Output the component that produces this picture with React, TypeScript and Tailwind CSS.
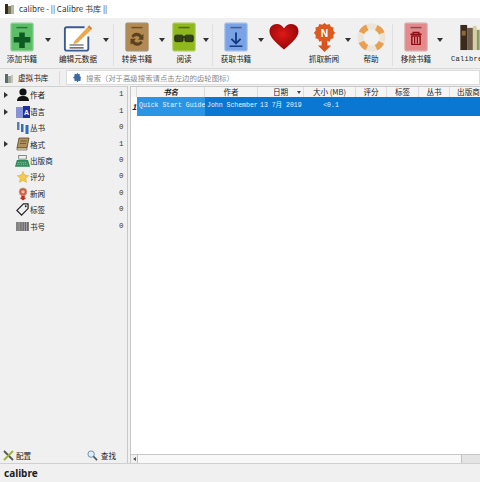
import React from 'react';

const cjk = { fontFamily: '"Noto Sans CJK SC", sans-serif' };

const Arrow = () => (
  <div className="w-0 h-0 border-l-[3.5px] border-r-[3.5px] border-t-[4px] border-l-transparent border-r-transparent border-t-[#333]" />
);

const BookShape = ({ fill, edge, children }: { fill: string; edge: string; children?: React.ReactNode }) => (
  <svg width="24" height="30" viewBox="0 0 26 32">
    <rect x="1" y="1" width="24" height="30" rx="1.5" fill={fill} stroke={edge} strokeWidth="1.2" />
    <rect x="7" y="5" width="12" height="1.6" fill="#222" opacity=".55" />
    {children}
  </svg>
);

const AddIcon = () => (
  <BookShape fill="#5cbf68" edge="#8ccf90">
    <path d="M10 11h6v5h6v6h-6v6h-6v-6H4v-6h6z" fill="#0d5a22" />
  </BookShape>
);

const EditIcon = () => (
  <svg width="30" height="29" viewBox="0 0 32 30">
    <path d="M23 4H4a2 2 0 0 0-2 2v21a2 2 0 0 0 2 2h21a2 2 0 0 0 2-2V14" fill="#fff" stroke="#3c5a92" strokeWidth="2" />
    <path d="M12 19 26 4l4 3-15 14-4 1z" fill="#eda94f" />
    <path d="M26 4l2-2 3 3-1 2z" fill="#d0863a" />
    <path d="M7 23h15M7 26h15" stroke="#444" strokeWidth="1.2" />
  </svg>
);

const ConvertIcon = () => (
  <BookShape fill="#b48a52" edge="#a08c6c">
    <path d="M7 15a6.5 6.5 0 0 1 11-1l2-1v6h-6l2-2a4 4 0 0 0-7 0z" fill="#5a4320" />
    <path d="M19 22a6.5 6.5 0 0 1-11 1l-2 1v-6h6l-2 2a4 4 0 0 0 7 0z" fill="#5a4320" />
  </BookShape>
);

const ReadIcon = () => (
  <BookShape fill="#8eb81c" edge="#a5c84a">
    <rect x="3" y="14" width="9" height="7" rx="1.5" fill="#33401a" stroke="#1f2a10" />
    <rect x="14" y="14" width="9" height="7" rx="1.5" fill="#33401a" stroke="#1f2a10" />
    <path d="M12 16h2" stroke="#1f2a10" strokeWidth="1.4" />
  </BookShape>
);

const GetIcon = () => (
  <BookShape fill="#7aa3e6" edge="#9dbbe8">
    <path d="M13 11v11M8 18l5 5 5-5" fill="none" stroke="#153a80" strokeWidth="2" />
    <path d="M6 26h14" stroke="#153a80" strokeWidth="1.6" />
  </BookShape>
);

const HeartIcon = () => (
  <svg width="30" height="28" viewBox="0 0 31 28">
    <defs>
      <radialGradient id="heart" cx="45%" cy="40%" r="65%">
        <stop offset="0%" stopColor="#e01818" />
        <stop offset="100%" stopColor="#8c0404" />
      </radialGradient>
    </defs>
    <path d="M15.5 27C9 21 .5 15 .5 8 .5 3.500 4 .5 8 .5c3.500 0 6 2 7.500 4.500C17 2.500 19.500 .5 23 .5c4 0 7.500 3 7.500 7.500 0 7-8.500 13-15 19z" fill="url(#heart)" />
  </svg>
);

const NewsIcon = () => (
  <svg width="21" height="29" viewBox="0 0 22 31">
    <path d="M8 19h6v5h4l-7 7-7-7h4z" fill="#d9531e" />
    <path d="M11 0l2.500 2 3-1 1.200 3 3 .8-.4 3.200 2 2.500-2 2.500.4 3.200-3 .8-1.200 3-3-1-2.500 2-2.500-2-3 1-1.200-3-3-.8.400-3.200-2-2.500 2-2.500-.4-3.200 3-.8 1.200-3 3 1z" fill="#dc5a20" />
    <text x="11" y="15" textAnchor="middle" fontSize="11" fontWeight="700" fill="#fff" fontFamily="Liberation Sans, sans-serif">N</text>
  </svg>
);

const HelpIcon = () => (
  <svg width="29" height="29" viewBox="0 0 29 29">
    <circle cx="14.5" cy="14.5" r="11" fill="none" stroke="#ece4d6" strokeWidth="6" />
    <circle cx="14.500" cy="14.500" r="11" fill="none" stroke="#e8a050" strokeWidth="6" strokeDasharray="8 9.28" strokeDashoffset="4" transform="rotate(45 14.5 14.5)" />
  </svg>
);

const RemoveIcon = () => (
  <BookShape fill="#e58a8c" edge="#d8a8a8">
    <path d="M7 13h12M10 13v-2h6v2M8.500 15h9v9h-9z" fill="none" stroke="#8e0f14" strokeWidth="1.600" />
    <path d="M11.500 16v7M14.500 16v7" stroke="#8e0f14" strokeWidth="1.300" />
  </BookShape>
);

const ShelfIcon = () => (
  <svg width="20" height="27" viewBox="0 0 20 28">
    <rect x="0" y="1" width="7" height="26" fill="#3b2a1c" />
    <rect x="7" y="4" width="6" height="23" fill="#6d5f48" />
    <rect x="13" y="2" width="4" height="25" fill="#d8cfa8" />
    <rect x="17" y="6" width="3" height="21" fill="#8a9a60" />
    <rect x="1.500" y="7" width="4" height="5" fill="#8a6a38" />
  </svg>
);

type Tool = {
  label: string;
  box: string;
  icon: React.ReactNode;
  arrow?: string;
  sep?: string;
  mono?: boolean;
};

// box = left margin + width so each icon and label land on the reference's centre line
const tools: Tool[] = [
  { label: '添加书籍', box: 'w-[44px]', icon: <AddIcon />, arrow: 'left-[44.5px]' },
  { label: '编辑元数据', box: 'ml-[12px] w-[44px]', icon: <EditIcon />, arrow: 'left-[46.5px]', sep: 'left-[57px]' },
  { label: '转换书籍', box: 'ml-[15px] w-[44px]', icon: <ConvertIcon />, arrow: 'left-[43.5px]' },
  { label: '阅读', box: 'ml-[3px] w-[44px]', icon: <ReadIcon />, arrow: 'left-[40.5px]', sep: 'left-[50px]' },
  { label: '获取书籍', box: 'ml-[8px] w-[44px]', icon: <GetIcon />, arrow: 'left-[43.5px]' },
  { label: '', box: 'ml-[11px] w-[30px]', icon: <HeartIcon /> },
  { label: '抓取新闻', box: 'ml-[3px] w-[44px]', icon: <NewsIcon />, arrow: 'left-[42.5px]' },
  { label: '帮助', box: 'ml-[3px] w-[44px]', icon: <HelpIcon />, sep: 'left-[43px]' },
  { label: '移除书籍', box: 'ml-[1px] w-[44px]', icon: <RemoveIcon />, arrow: 'left-[42.5px]' },
  { label: 'Calibre 书库', box: 'ml-[13px] w-[60px]', icon: <ShelfIcon />, mono: true },
];

const ToolButton = ({ tool }: { tool: Tool }) => (
  <div className={`relative shrink-0 flex flex-col ${tool.mono ? 'items-start' : 'items-center'} ${tool.box}`}>
    <div className={`flex h-[30px] items-center justify-center ${tool.mono ? 'ml-[9px]' : ''}`}>{tool.icon}</div>
    <div
      className={`mt-[1px] whitespace-nowrap leading-[12px] text-[#222] ${tool.mono ? 'text-[7px] tracking-[0.3px]' : 'text-[7.6px]'}`}
      style={tool.mono ? { fontFamily: '"Liberation Mono", monospace' } : cjk}
    >
      {tool.label}
    </div>
    {tool.arrow && (
      <div className={`absolute top-[16px] ${tool.arrow}`}>
        <Arrow />
      </div>
    )}
    {tool.sep && <div className={`absolute top-[2px] h-[42px] w-px bg-[#e0e0e0] ${tool.sep}`} />}
  </div>
);

const PersonIcon = () => (
  <svg width="14" height="14" viewBox="0 0 14 14">
    <circle cx="7" cy="4" r="3.600" fill="#111" />
    <path d="M1 13c0-4 3-5 6-5s6 1 6 5z" fill="#111" />
  </svg>
);
const LangIcon = () => (
  <svg width="14" height="14" viewBox="0 0 14 14">
    <rect x="0" y="2" width="7" height="11" fill="#8892d8" />
    <rect x="7" y="1" width="7" height="12" fill="#20309a" />
    <text x="10.500" y="10" textAnchor="middle" fontSize="7" fontWeight="700" fill="#fff" fontFamily="Liberation Sans, sans-serif">A</text>
  </svg>
);
const SeriesIcon = () => (
  <svg width="14" height="14" viewBox="0 0 14 14">
    <rect x="1" y="1" width="2.500" height="8" fill="#5a7fa8" />
    <rect x="5" y="3" width="2.500" height="8" fill="#3a6ea8" />
    <rect x="9.500" y="4" width="3" height="9" fill="#2a70c0" />
  </svg>
);
const FormatIcon = () => (
  <svg width="14" height="14" viewBox="0 0 14 14">
    <path d="M3 1h10l-2 10H1z" fill="#b0905c" stroke="#5a4628" strokeWidth=".8" />
    <path d="M1 11h10v2H1z" fill="#e8dcc0" stroke="#5a4628" strokeWidth=".6" />
    <path d="M4.500 4h6M4 6.500h6" stroke="#5a4628" strokeWidth=".7" />
  </svg>
);
const PublisherIcon = () => (
  <svg width="16" height="14" viewBox="0 0 16 14">
    <rect x="4" y="1" width="8" height="4" fill="#eee" stroke="#555" strokeWidth=".7" />
    <path d="M2 6h12l2 7H0z" fill="#2f8a5a" />
    <path d="M3 8.500h10M2.500 10.500h11" stroke="#bfe8d0" strokeWidth=".8" strokeDasharray="1 1" />
  </svg>
);
const StarIcon = () => (
  <svg width="12" height="12" viewBox="0 0 14 14">
    <path d="M7 .5l2 4.300 4.700.6-3.500 3.200.9 4.700L7 11l-4.100 2.300.9-4.700L.3 5.400 5 4.800z" fill="#f2c94c" stroke="#e0a830" strokeWidth=".6" />
  </svg>
);
const NewsSmallIcon = () => (
  <svg width="12" height="14" viewBox="0 0 14 15">
    <path d="M5 9h4v3h2l-4 3-4-3h2z" fill="#b83020" />
    <circle cx="7" cy="5" r="4.500" fill="#d85a40" stroke="#b0a080" strokeWidth=".8" />
    <circle cx="7" cy="5" r="2" fill="#f2c0a8" />
  </svg>
);
const TagIcon = () => (
  <svg width="13" height="13" viewBox="0 0 14 14">
    <path d="M1 8l7-7h5v5l-7 7z" fill="#eee" stroke="#222" strokeWidth="1.300" />
    <circle cx="10.500" cy="3.500" r="1" fill="#222" />
  </svg>
);
const BarcodeIcon = () => (
  <svg width="13" height="9" viewBox="0 0 14 10">
    <rect width="14" height="10" fill="#666" />
    <path d="M2 0v10M4 0v10M6.500 0v10M9 0v10M11.500 0v10" stroke="#ccc" strokeWidth=".7" />
  </svg>
);

const categories: { icon: React.ReactNode; label: string; count: number; expand?: boolean }[] = [
  { icon: <PersonIcon />, label: '作者', count: 1, expand: true },
  { icon: <LangIcon />, label: '语言', count: 1, expand: true },
  { icon: <SeriesIcon />, label: '丛书', count: 0 },
  { icon: <FormatIcon />, label: '格式', count: 1, expand: true },
  { icon: <PublisherIcon />, label: '出版商', count: 0 },
  { icon: <StarIcon />, label: '评分', count: 0 },
  { icon: <NewsSmallIcon />, label: '新闻', count: 0 },
  { icon: <TagIcon />, label: '标签', count: 0 },
  { icon: <BarcodeIcon />, label: '书号', count: 0 },
];

const columns: { label: string; width: string; bold?: boolean; sort?: boolean }[] = [
  { label: '书名', width: 'w-[68px]', bold: true },
  { label: '作者', width: 'w-[53px]' },
  { label: '日期', width: 'w-[46px]', sort: true },
  { label: '大小 (MB)', width: 'w-[52px]' },
  { label: '评分', width: 'w-[31px]' },
  { label: '标签', width: 'w-[32px]' },
  { label: '丛书', width: 'w-[31px]' },
  { label: '出版商', width: 'w-[38px]' },
];

const rowCells: { text: string; width: string; light?: boolean; center?: boolean }[] = [
  { text: 'Quick Start Guide', width: 'w-[68px]', light: true },
  { text: 'John Schember', width: 'w-[53px]' },
  { text: '13 7月 2019', width: 'w-[46px]' },
  { text: '<0.1', width: 'w-[52px]', center: true },
];

export default function App() {
  return (
    <div className="flex h-[482px] w-[480px] flex-col overflow-hidden bg-[#f0f0f0]" style={cjk}>
      {/* title bar */}
      <div className="flex h-[18px] shrink-0 items-center gap-[5px] bg-white pl-[5px]">
        <svg width="9" height="10" viewBox="0 0 9 10">
          <rect x="0" y="0" width="3" height="10" fill="#3b2a1c" />
          <rect x="3" y="2" width="3" height="8" fill="#7a7a62" />
          <rect x="6" y="1" width="3" height="9" fill="#b8b8a0" />
        </svg>
        <span className="text-[8px] leading-none text-[#333]">calibre - || Calibre 书库 ||</span>
      </div>

      {/* toolbar */}
      <div className="flex h-[51px] shrink-0 items-start overflow-hidden border-b border-[#d8d8d8] pt-[4px]">
        {tools.map((tool) => (
          <ToolButton key={tool.label || 'heart'} tool={tool} />
        ))}
      </div>

      {/* search row */}
      <div className="flex h-[17px] shrink-0 items-center">
        <div className="flex w-[60px] shrink-0 items-center gap-[4px] border-r border-[#dcdcdc] pl-[5px]">
          <svg width="9" height="10" viewBox="0 0 9 10">
            <rect x="0" y="1" width="3" height="9" fill="#5a6a6a" />
            <rect x="3" y="3" width="3" height="7" fill="#a0a8a0" />
            <rect x="6" y="2" width="2" height="8" fill="#c8c8b8" />
          </svg>
          <span className="whitespace-nowrap text-[7.6px] leading-[14px] text-[#222]">虚拟书库</span>
        </div>
        <div className="ml-[6px] flex h-[15px] flex-1 items-center gap-[4px] border border-[#dcdcdc] bg-white pl-[6px]">
          <svg width="9" height="9" viewBox="0 0 24 24" fill="#3d6a9e">
            <path d="M12 8a4 4 0 1 0 0 8 4 4 0 0 0 0-8zm9 6.300v-4.600l-2.700-.5-.7-1.700 1.600-2.300-3.200-3.200-2.300 1.600-1.700-.7L13.500 0h-3l-.5 2.900-1.700.7L6 2 2.800 5.200l1.600 2.300-.7 1.700-2.700.5v4.600l2.700.5.7 1.700-1.600 2.300L6 22l2.300-1.600 1.700.7.500 2.900h3l.5-2.900 1.700-.7L18 22l3.200-3.200-1.600-2.300.7-1.700z" />
          </svg>
          <span className="whitespace-nowrap text-[7.4px] leading-none text-[#8a8a8a]">搜索（对于高级搜索请点击左边的齿轮图标）</span>
        </div>
      </div>

      {/* main */}
      <div className="flex min-h-0 flex-1">
        {/* tag browser */}
        <div className="flex w-[128px] shrink-0 flex-col border-r border-t border-r-[#c8c8c8] border-t-[#d0d0d0]">
          <div className="flex-1">
            {categories.map((c) => (
              <div key={c.label} className="flex h-[16.4px] items-center">
                <div className="flex w-[15px] justify-center">
                  {c.expand && (
                    <div className="mr-[3px] h-0 w-0 border-b-[3.5px] border-l-[4px] border-t-[3.5px] border-b-transparent border-l-[#333] border-t-transparent" />
                  )}
                </div>
                <div className="flex w-[15px] justify-center">{c.icon}</div>
                <span className="flex-1 text-[7.6px] leading-none text-[#222]">{c.label}</span>
                <span className="mr-[3px] w-[5px] text-[7.5px] leading-none text-[#333]" style={{ fontFamily: '"Liberation Mono", monospace' }}>
                  {c.count}
                </span>
              </div>
            ))}
          </div>
          <div className="flex h-[15px] items-center justify-between pl-[3px] pr-[11px]">
            <div className="flex items-center gap-[2px]">
              <svg width="11" height="11" viewBox="0 0 11 11">
                <path d="M1 1l9 9" stroke="#555" strokeWidth="1.800" />
                <path d="M10 1L1 10" stroke="#9ab040" strokeWidth="1.800" />
              </svg>
              <span className="text-[7.6px] leading-none text-[#222]">配置</span>
            </div>
            <div className="flex items-center gap-[3px]">
              <svg width="11" height="11" viewBox="0 0 12 12">
                <circle cx="4.500" cy="4.500" r="3.500" fill="#dcecf8" stroke="#6a8aa8" />
                <path d="M7 7l4 4" stroke="#555" strokeWidth="1.800" />
              </svg>
              <span className="text-[7.6px] leading-none text-[#222]">查找</span>
            </div>
          </div>
        </div>

        {/* book list */}
        <div className="ml-[2px] flex min-w-0 flex-1 flex-col border-l border-t border-[#c8c8c8] bg-white">
          <div className="flex h-[10px] shrink-0 items-center bg-[#f5f5f5]">
            <div className="h-full w-[6px] shrink-0 border-r border-[#dcdcdc]" />
            {columns.map((col) => (
              <div
                key={col.label}
                className={`relative flex h-full shrink-0 items-center justify-center border-r border-[#dcdcdc] text-[7.6px] leading-none text-[#222] ${col.width} ${col.bold ? 'font-bold italic' : ''}`}
              >
                <span className="whitespace-nowrap">{col.label}</span>
                {col.sort && (
                  <div className="absolute right-[2px] h-0 w-0 border-l-[2.500px] border-r-[2.500px] border-t-[3px] border-l-transparent border-r-transparent border-t-[#444]" />
                )}
              </div>
            ))}
          </div>
          <div className="flex h-[19px] shrink-0 bg-[#0a78d2]">
            <div className="flex w-[6px] shrink-0 items-center justify-center bg-white text-[8px] font-bold italic leading-none text-[#222]">1</div>
            {rowCells.map((cell) => (
              <div
                key={cell.text}
                className={`flex shrink-0 items-center overflow-hidden whitespace-nowrap pl-[2px] text-[6.5px] leading-none text-[#e8f4ff] ${cell.width} ${cell.light ? 'bg-[#2a95e4]' : ''} ${cell.center ? 'justify-center' : ''}`}
                style={{ fontFamily: '"Liberation Mono", "Noto Sans CJK SC", monospace' }}
              >
                {cell.text}
              </div>
            ))}
          </div>
          <div className="flex-1" />
          {/* horizontal scrollbar */}
          <div className="flex h-[9px] shrink-0 items-stretch border-t border-[#c8c8c8] bg-[#e4e4e4]">
            <div className="flex w-[6px] items-center justify-center bg-[#f0f0f0]">
              <div className="h-0 w-0 border-b-[2.5px] border-r-[3px] border-t-[2.5px] border-b-transparent border-r-[#555] border-t-transparent" />
            </div>
            <div className="w-[325px] border-x border-[#c0c0c0] bg-[#f8f8f8]" />
          </div>
        </div>
      </div>

      {/* status bar */}
      <div className="flex h-[19px] shrink-0 items-center border-t border-[#d0d0d0] pl-[4px]">
        <span className="text-[10px] font-bold leading-none text-[#222]" style={{ fontFamily: '"Noto Sans", sans-serif' }}>calibre</span>
      </div>
    </div>
  );
}
